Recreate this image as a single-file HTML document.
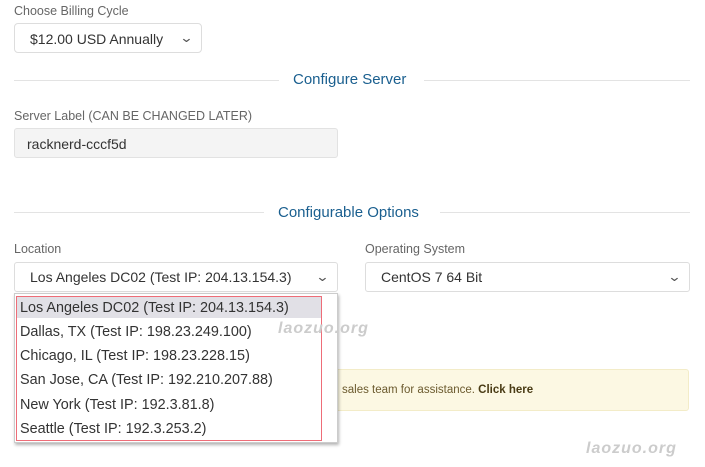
<!DOCTYPE html>
<html><head><style>
body{margin:0;width:705px;height:467px;background:#fff;font-family:"Liberation Sans",sans-serif;position:relative;overflow:hidden;color:#333}
.a{position:absolute}
.lbl{font-size:12.5px;color:#666}
.sel{border:1px solid #ddd;border-radius:3px;background:#fff;font-size:14px;color:#333;box-sizing:border-box}
.chev{position:absolute;right:9px;top:6px;font-size:13px;color:#555;transform:scaleX(1.3)}
.hr{height:1px;background:#e3e3e3}
.h{color:#1a5f8f;font-size:15px}
.opt{position:absolute;left:20px;font-size:14.4px;color:#333}
</style></head><body>
<div class="a lbl" style="left:14px;top:4px">Choose Billing Cycle</div>
<div class="a sel" style="left:14px;top:23px;width:188px;height:30px;border-radius:4px"><span class="a" style="left:15px;top:7px">$12.00 USD Annually</span><span class="chev">&#8964;</span></div>
<div class="a hr" style="left:14px;top:80px;width:265px"></div>
<div class="a h" style="left:293px;top:71px">Configure Server</div>
<div class="a hr" style="left:424px;top:80px;width:266px"></div>
<div class="a lbl" style="left:14px;top:109px">Server Label (CAN BE CHANGED LATER)</div>
<div class="a sel" style="left:14px;top:128px;width:324px;height:30px;background:#f4f4f4;border-color:#e2e2e2"><span class="a" style="left:12px;top:7px">racknerd-cccf5d</span></div>
<div class="a hr" style="left:14px;top:212px;width:250px"></div>
<div class="a h" style="left:278px;top:204px">Configurable Options</div>
<div class="a hr" style="left:440px;top:212px;width:250px"></div>
<div class="a lbl" style="left:14px;top:242px">Location</div>
<div class="a sel" style="left:14px;top:262px;width:324px;height:30px"><span class="a" style="left:15px;top:6px">Los Angeles DC02 (Test IP: 204.13.154.3)</span><span class="chev">&#8964;</span></div>
<div class="a lbl" style="left:365px;top:242px">Operating System</div>
<div class="a sel" style="left:365px;top:262px;width:325px;height:30px"><span class="a" style="left:15px;top:6px">CentOS 7 64 Bit</span><span class="chev">&#8964;</span></div>
<div class="a" style="left:330px;top:369px;width:359px;height:42px;background:#fcf8e3;border:1px solid #f3ecc8;border-radius:3px;box-sizing:border-box"><span class="a" style="left:11px;top:14px;font-size:11.5px;color:#6b5a2e">sales team for assistance. <b style="color:#4a3c15">Click here</b></span></div>
<div class="a" style="left:14px;top:293px;width:324px;height:150px;background:#fff;border:1px solid #ccc;box-shadow:1px 2px 3px rgba(0,0,0,.3);box-sizing:border-box"></div>
<div class="a" style="left:16px;top:297px;width:306px;height:21px;background:#e1e0e6"></div>
<div class="a" style="left:16px;top:296px;width:306px;height:145px;border:1px solid #ee6d78;box-sizing:border-box"></div>
<div class="opt" style="top:300px">Los Angeles DC02 (Test IP: 204.13.154.3)</div>
<div class="opt" style="top:324px">Dallas, TX (Test IP: 198.23.249.100)</div>
<div class="opt" style="top:348px">Chicago, IL (Test IP: 198.23.228.15)</div>
<div class="opt" style="top:372px">San Jose, CA (Test IP: 192.210.207.88)</div>
<div class="opt" style="top:397px">New York (Test IP: 192.3.81.8)</div>
<div class="opt" style="top:421px">Seattle (Test IP: 192.3.253.2)</div>
<div class="a" style="left:278px;top:320px;font-size:16px;font-weight:bold;font-style:italic;color:#ccc;letter-spacing:1px">laozuo.org</div>
<div class="a" style="left:586px;top:440px;font-size:16px;font-weight:bold;font-style:italic;color:#ccc;letter-spacing:1px">laozuo.org</div>
</body></html>
